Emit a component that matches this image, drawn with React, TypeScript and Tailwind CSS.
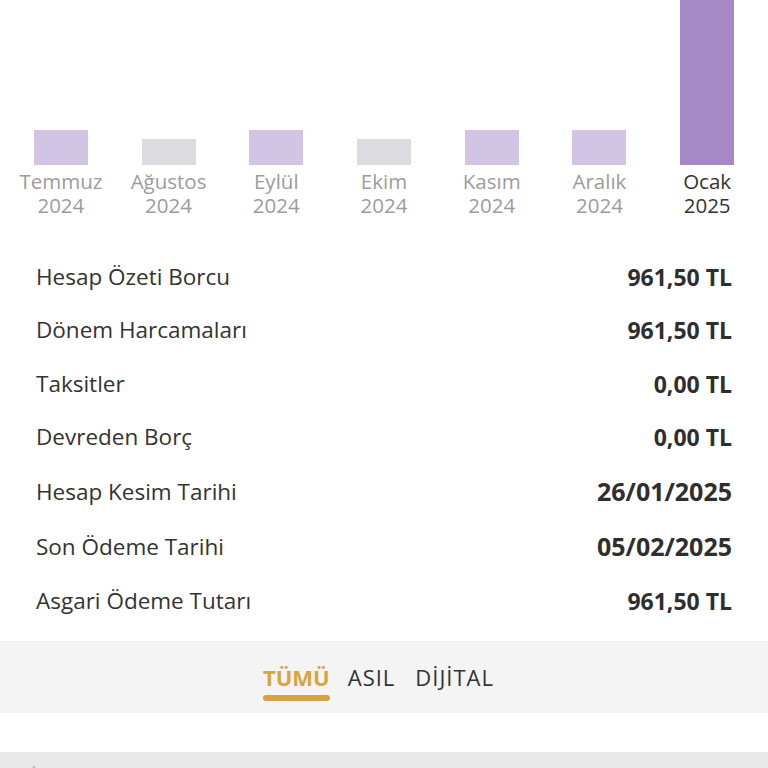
import React from "react";

const months = [
  { m: "Temmuz", y: "2024", h: 35, c: "bg-[#d1c4e4]", active: false },
  { m: "Ağustos", y: "2024", h: 26, c: "bg-[#dcdce0]", active: false },
  { m: "Eylül", y: "2024", h: 35, c: "bg-[#d1c4e4]", active: false },
  { m: "Ekim", y: "2024", h: 26, c: "bg-[#dcdce0]", active: false },
  { m: "Kasım", y: "2024", h: 35, c: "bg-[#d1c4e4]", active: false },
  { m: "Aralık", y: "2024", h: 35, c: "bg-[#d1c4e4]", active: false },
  { m: "Ocak", y: "2025", h: 165, c: "bg-[#a688c6]", active: true },
];

const rows = [
  { l: "Hesap Özeti Borcu", v: "961,50 TL", big: false },
  { l: "Dönem Harcamaları", v: "961,50 TL", big: false },
  { l: "Taksitler", v: "0,00 TL", big: false },
  { l: "Devreden Borç", v: "0,00 TL", big: false },
  { l: "Hesap Kesim Tarihi", v: "26/01/2025", big: true },
  { l: "Son Ödeme Tarihi", v: "05/02/2025", big: true },
  { l: "Asgari Ödeme Tutarı", v: "961,50 TL", big: false },
];

export default function App() {
  return (
    <div
      className="w-[768px] h-[768px] overflow-hidden bg-white flex flex-col"
      style={{ fontFamily: '"Open Sans", "Noto Sans", sans-serif' }}
    >
      {/* chart */}
      <div className="grid grid-cols-7 px-[7px] h-[218px] shrink-0">
        {months.map((mo) => (
          <div key={mo.m} className="flex flex-col items-center justify-end">
            <div className={`w-[54px] ${mo.c}`} style={{ height: mo.h }} />
            <div
              className={`mt-[4px] mb-[1px] text-[20.5px] leading-[24px] text-center ${
                mo.active ? "text-[#333333]" : "text-[#9c9c9c]"
              }`}
            >
              <div>{mo.m}</div>
              <div>{mo.y}</div>
            </div>
          </div>
        ))}
      </div>

      {/* rows */}
      <div className="mt-[32px] flex flex-col px-[36px] shrink-0">
        {rows.map((r) => (
          <div
            key={r.l}
            className={`flex items-center justify-between ${
              r.big ? "h-[55px]" : "h-[53.5px]"
            }`}
          >
            <span className="text-[22.5px] text-[#333333]">{r.l}</span>
            <span
              className={`font-bold text-[#2e2e2e] ${
                r.big ? "text-[25px]" : "text-[23px]"
              }`}
            >
              {r.v}
            </span>
          </div>
        ))}
      </div>

      {/* tabs */}
      <div className="mt-[13px] h-[72px] bg-[#f4f4f4] flex justify-center items-start shrink-0">
        <div className="flex pr-[11px] pt-[23px]">
          <div className="flex flex-col items-stretch">
            <span className="text-[22px] leading-[26px] font-bold text-[#d7a540]">
              TÜMÜ
            </span>
            <div className="mt-[5px] h-[6px] rounded-full bg-[#d6a440]" />
          </div>
          <span className="ml-[18px] text-[22px] leading-[26px] font-medium tracking-[1px] text-[#333333]">
            ASIL
          </span>
          <span className="ml-[20px] text-[22px] leading-[26px] font-medium tracking-[1px] text-[#333333]">
            DİJİTAL
          </span>
        </div>
      </div>

      <div className="h-[39px] shrink-0 bg-white" />

      <div className="flex-1 bg-[#e9e9e9] px-[31px] pt-[13px]">
        <span className="text-[20px] leading-[24px] text-[#b5b5b5]">İşlemler</span>
      </div>
    </div>
  );
}
